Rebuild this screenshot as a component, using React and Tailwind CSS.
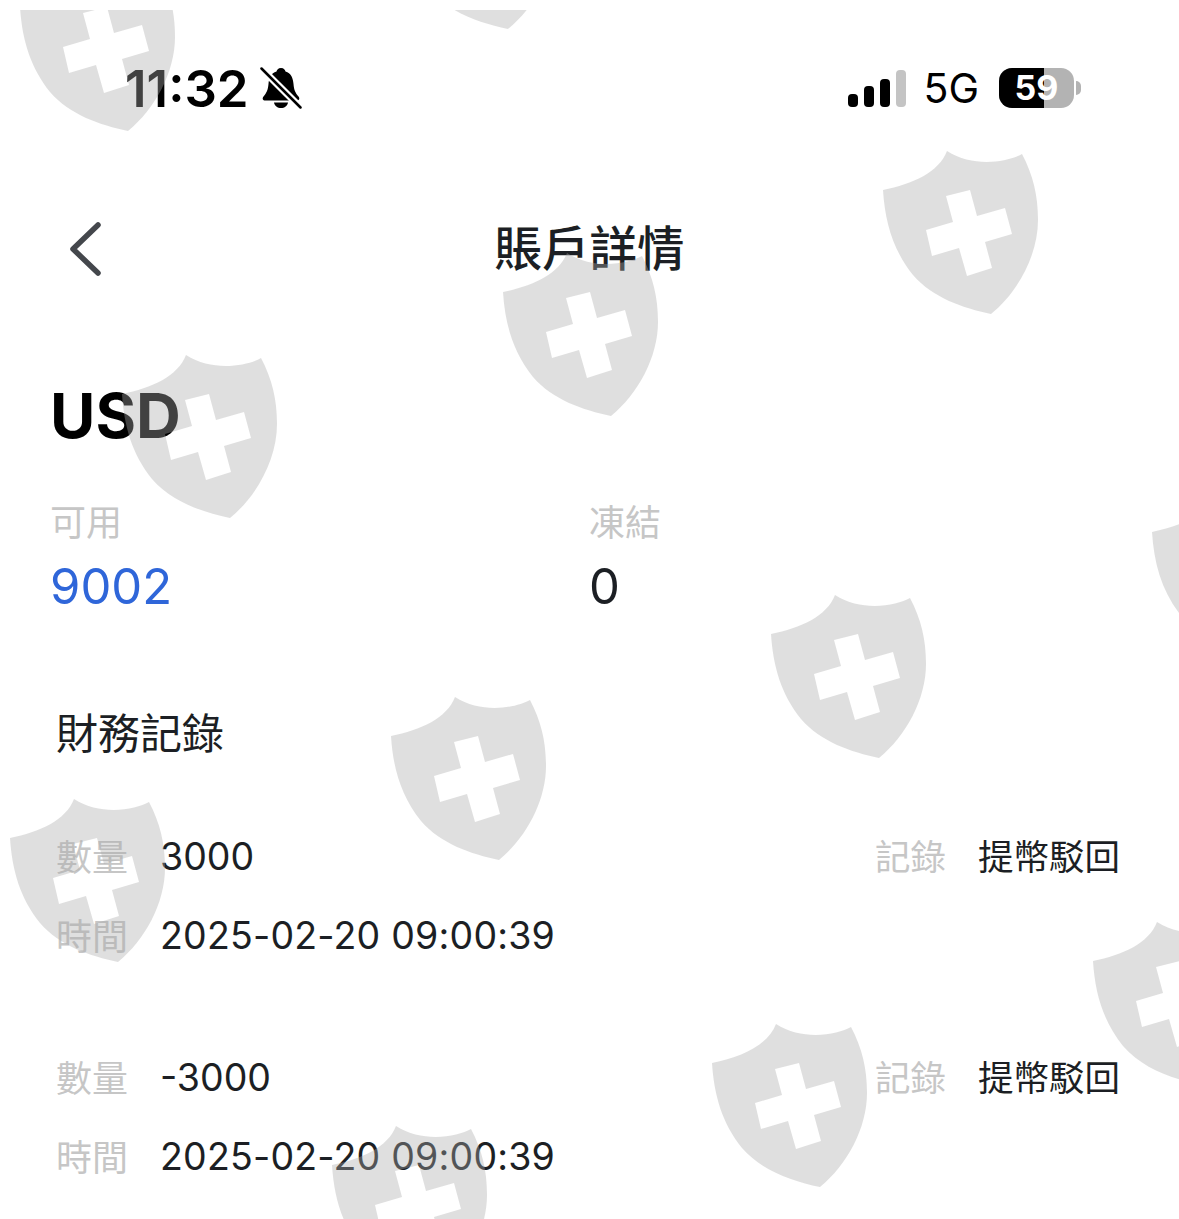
const shields = [
  [20, -43],
  [400, -145],
  [883, 140],
  [503, 242],
  [122, 344],
  [1152, 482],
  [771, 584],
  [391, 686],
  [10, 788],
  [1093, 911],
  [712, 1013],
  [332, 1115],
];

const Shield = ({ x, y }) => (
  <svg
    viewBox="0 0 156 166"
    className="absolute w-[156px] h-[166px]"
    style={{ left: x, top: y }}
  >
    <path
      fillRule="evenodd"
      fill="#aaaaaa"
      fillOpacity="0.38"
      d="M64 1C56 22 30 34 0 40C2 72 10 100 30 125C50 148 80 158 108 164C135 142 155 105 155 70C155 45 150 25 139 4C125 12 90 18 64 1ZM63 46L87 40L94 66L122 58L129 84L102 92L109 118L84 126L76 98L49 106L43 80L70 72Z"
    />
  </svg>
);

const BellOff = () => (
  <svg viewBox="0 0 42 42" className="w-[42px] h-[42px]">
    <path d="M21 1c3 0 4 2 4.500 3.500C31 6 33 11 33.500 17c.4 6 2 9 5 12.500 1.500 2 1 4-2 4H5.500c-3 0-3.500-2-2-4C6.500 26 8 23 8.500 17 9 11 11 6 16.500 4.500 17 3 18 1 21 1Z" />
    <path d="M14 35.500h14c-.5 3.500-3.500 5.500-7 5.500s-6.500-2-7-5.500Z" />
    <path d="M2 2L40 40" stroke="white" strokeWidth="7" />
    <path d="M1.500 1.500L40.500 40.500" stroke="black" strokeWidth="2.500" strokeLinecap="round" />
  </svg>
);

const Signal = () => (
  <div className="flex items-end gap-[6px] h-[37px]">
    <div className="w-[10px] h-[13px] rounded-[4px] bg-black" />
    <div className="w-[10px] h-[21px] rounded-[4px] bg-black" />
    <div className="w-[10px] h-[28px] rounded-[4px] bg-black" />
    <div className="w-[10px] h-[37px] rounded-[4px] bg-[#c4c4c4]" />
  </div>
);

const Battery = () => (
  <div className="flex items-center gap-[2px]">
    <div className="relative w-[75px] h-[40px] rounded-[13px] overflow-hidden bg-[#b3b3b3]">
      <div className="h-full w-[45px] bg-black" />
      <div className="absolute inset-0 flex items-center justify-center text-[34px] leading-none font-bold text-white">
        59
      </div>
    </div>
    <div className="w-[5px] h-[14px] bg-[#b3b3b3] rounded-r-full" />
  </div>
);

const Record = ({ amount }) => (
  <div className="flex justify-between h-[158px] pl-[56px] pr-[59px]">
    <div className="flex flex-col">
      <div className="flex items-center h-[79px]">
        <span className="w-[104px] text-[36px] text-[#c6c6c6]">數量</span>
        <span className="text-[37.500px] text-[#1c1f24]">{amount}</span>
      </div>
      <div className="flex items-center h-[79px]">
        <span className="w-[104px] text-[36px] text-[#c6c6c6]">時間</span>
        <span className="text-[37.500px] text-[#1c1f24] tracking-[0.2px]">2025-02-20 09:00:39</span>
      </div>
    </div>
    <div className="flex items-center h-[79px]">
      <span className="w-[103px] text-[35.500px] text-[#c6c6c6]">記錄</span>
      <span className="text-[35.500px] text-[#1c1f24]">提幣駁回</span>
    </div>
  </div>
);

const App = () => {
  return (
    <div className="relative w-[1179px] h-[1219px] overflow-hidden bg-white font-['Inter','Noto_Sans_CJK_TC',sans-serif]">
      <div className="flex items-center justify-between h-[88px] mt-[44px] pl-[125px] pr-[98px]">
        <div className="flex items-center gap-[11px]">
          <span className="text-[51px] leading-none font-semibold text-black">11:32</span>
          <BellOff />
        </div>
        <div className="flex items-center">
          <Signal />
          <span className="ml-[17px] mr-[20px] text-[41px] leading-none text-black">5G</span>
          <Battery />
        </div>
      </div>

      <div className="relative flex items-center justify-center h-[100px] mt-[67px]">
        <svg viewBox="0 0 32 56" className="absolute left-[70px] w-[32px] h-[56px]" fill="none">
          <path d="M28 4L3 28L28 52" stroke="#44474c" strokeWidth="5.500" strokeLinecap="round" strokeLinejoin="round" />
        </svg>
        <span className="text-[47.500px] font-medium text-[#1c1f24]">賬戶詳情</span>
      </div>

      <div className="pl-[50px] pr-[52px] mt-[82px]">
        <div className="text-[62px] leading-[70px] font-bold text-black">USD</div>
        <div className="flex mt-[50px]">
          <div className="w-[539px]">
            <div className="text-[36px] leading-[44px] text-[#c6c6c6]">可用</div>
            <div className="text-[49px] leading-[64px] text-[#2f66d9] mt-[10px]">9002</div>
          </div>
          <div>
            <div className="text-[36px] leading-[44px] text-[#c6c6c6]">凍結</div>
            <div className="text-[49px] leading-[64px] text-[#1c1f24] mt-[10px]">0</div>
          </div>
        </div>
      </div>

      <div className="pl-[56px] mt-[85px] text-[42px] leading-[60px] text-[#1c1f24]">財務記錄</div>

      <div className="flex flex-col gap-[63px] mt-[54px]">
        <Record amount="3000" />
        <Record amount="-3000" />
      </div>

      <div className="absolute inset-x-0 top-[10px] bottom-0 overflow-hidden pointer-events-none">
        {shields.map(([x, y]) => (
          <Shield key={`${x}-${y}`} x={x} y={y} />
        ))}
      </div>
    </div>
  );
};

export default App;
